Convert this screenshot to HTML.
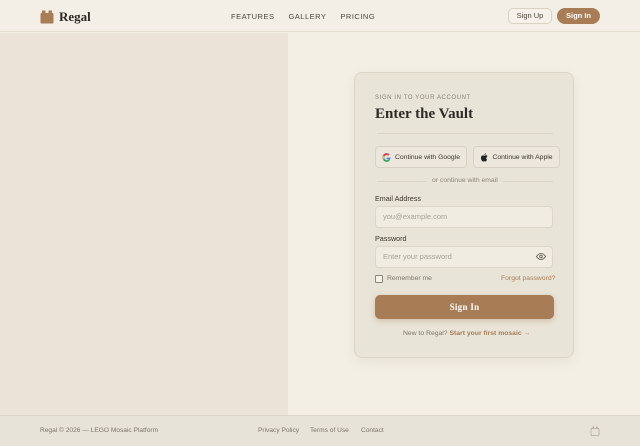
<!DOCTYPE html>
<html><head><style>
*{box-sizing:border-box;margin:0;padding:0}
body{width:640px;height:446px;overflow:hidden;background:#f4efe5;font-family:"Liberation Sans",sans-serif;position:relative;color:#3a332b}
.hdr{position:absolute;top:0;left:0;width:640px;height:32px;background:#f4efe6;border-bottom:1px solid #e4ddd0}
.logo{position:absolute;left:40px;top:9px;display:flex;align-items:center;gap:5px;font-family:"Liberation Serif",serif;font-weight:bold;font-size:13px;color:#2e2a25}
.nav{position:absolute;left:231px;top:12px;font-size:7.5px;letter-spacing:.5px;color:#4a443c}
.nav span{margin-right:14px}
.b1{position:absolute;left:508px;top:8px;width:44px;height:16px;border:1px solid #d9d2c4;border-radius:5px;font-size:7.5px;text-align:center;line-height:14px;color:#4a443c;background:#f6f2ea}
.b2{position:absolute;left:557px;top:8px;width:43px;height:16px;border-radius:8px;background:#a87c55;color:#fff;font-size:7.5px;font-weight:bold;text-align:center;line-height:16px}
.left{position:absolute;left:0;top:33px;width:288px;height:382px;background:#ebe3d7}
.card{position:absolute;left:354px;top:72px;width:220px;height:286px;background:#e9e4d8;border:1px solid #dcd5c6;border-radius:8px;box-shadow:0 4px 14px rgba(0,0,0,.06)}
.abs{position:absolute}
.btn{position:absolute;top:73px;height:22px;border:1px solid #d9d2c4;border-radius:4px;background:#ece7dc;font-size:6.8px;display:flex;align-items:center;justify-content:center;gap:4px;color:#3a332b}
.inp{position:absolute;left:20px;width:178px;height:22px;border:1px solid #ddd6c8;border-radius:4px;background:#f0ece2;font-size:7.5px;color:#a8a095;padding-left:7px;line-height:20px}
.lbl{font-size:7.2px;color:#3a332b}
.ftr{position:absolute;left:0;top:415px;width:640px;height:31px;background:#e8e3d8;border-top:1px solid #ddd6c8;font-size:6.6px;color:#7c756b}
</style></head><body>
<div class="hdr">
 <div class="logo"><svg width="14" height="14" viewBox="0 0 14 14"><rect x="2" y="0.5" width="3.5" height="3" fill="#a87c55"/><rect x="8.5" y="0.5" width="3.5" height="3" fill="#a87c55"/><rect x="0.5" y="3" width="13" height="10.5" rx="1" fill="#a87c55"/></svg>Regal</div>
 <div class="nav"><span>FEATURES</span><span>GALLERY</span><span>PRICING</span></div>
 <div class="b1">Sign Up</div><div class="b2">Sign In</div>
</div>
<div class="left"></div>
<div class="card">
 <div class="abs" style="left:20px;top:22px;font-size:6px;letter-spacing:.6px;color:#8a8378">SIGN IN TO YOUR ACCOUNT</div>
 <div class="abs" style="left:20px;top:33px;font-family:'Liberation Serif',serif;font-weight:bold;font-size:15px;color:#2e2a25">Enter the Vault</div>
 <div class="abs" style="left:22px;top:60px;width:176px;height:1px;background:#dbd4c6"></div>
 <div class="btn" style="left:20px;width:92px"><svg width="9" height="9" viewBox="0 0 10 10"><path d="M9.5 5.1H5v1.8h2.6A2.8 2.8 0 1 1 7 2.9l1.3-1.3A4.6 4.6 0 1 0 9.5 5.1z" fill="#4285f4"/><path d="M1.2 2.6l1.5 1.1A2.8 2.8 0 0 1 7 2.9l1.3-1.3A4.6 4.6 0 0 0 1.2 2.6z" fill="#ea4335"/><path d="M1.2 7.4l1.5-1.1a2.8 2.8 0 0 0 4.6.9l1.3 1.2A4.6 4.6 0 0 1 1.2 7.4z" fill="#34a853"/><path d="M1.2 2.6a4.6 4.6 0 0 0 0 4.8l1.5-1.1a2.8 2.8 0 0 1 0-2.6z" fill="#fbbc05"/></svg>Continue with Google</div>
 <div class="btn" style="left:118px;width:87px"><svg width="8" height="9" viewBox="0 0 8 9"><path d="M6.6 4.8c0-1.1.9-1.6.9-1.7-.5-.7-1.3-.8-1.5-.8-.6-.1-1.2.4-1.6.4s-.9-.4-1.4-.3C2.3 2.4 1.6 2.8 1.3 3.5c-.7 1.2-.2 3 .5 4 .3.5.7 1 1.2 1s.6-.3 1.2-.3.7.3 1.2.3.8-.5 1.1-1c.4-.5.5-1 .5-1-.1 0-.9-.4-.9-1.7zM5.6 1.5C5.9 1.2 6 .8 6 .3c-.4 0-.8.3-1.1.6-.2.3-.4.7-.4 1.1.4 0 .8-.2 1.1-.5z" fill="#222"/></svg>Continue with Apple</div>
 <div class="abs" style="left:22px;top:108px;width:176px;height:1px;background:#dbd4c6"></div>
 <div class="abs" style="left:72px;top:104px;padding:0 5px;background:#e9e4d8;font-size:6.8px;color:#8a8378">or continue with email</div>
 <div class="abs lbl" style="left:20px;top:121px">Email Address</div>
 <div class="inp" style="top:133px">you@example.com</div>
 <div class="abs lbl" style="left:20px;top:161px">Password</div>
 <div class="inp" style="top:173px">Enter your password</div>
 <svg class="abs" style="left:181px;top:180px" width="10" height="7" viewBox="0 0 10 7"><path d="M.5 3.5C2 1 3.5.5 5 .5s3 .5 4.5 3C8 6 6.5 6.5 5 6.5S2 6 .5 3.5z" fill="none" stroke="#5a544b" stroke-width=".8"/><circle cx="5" cy="3.5" r="1.3" fill="none" stroke="#5a544b" stroke-width=".8"/></svg>
 <div class="abs" style="left:20px;top:202px;width:8px;height:8px;border:1px solid #8a8378;border-radius:1.5px;background:#f6f2ea"></div>
 <div class="abs" style="left:32px;top:202px;font-size:6.8px;color:#7c756b">Remember me</div>
 <div class="abs" style="left:146px;top:202px;font-size:6.8px;color:#a87c55">Forgot password?</div>
 <div class="abs" style="left:20px;top:222px;width:179px;height:24px;border-radius:5px;background:#a87c55;box-shadow:0 2px 6px rgba(168,124,85,.35);color:#fff;font-family:'Liberation Serif',serif;font-weight:bold;font-size:9px;text-align:center;line-height:24px;letter-spacing:.3px">Sign In</div>
 <div class="abs" style="left:48px;top:257px;font-size:6.8px;color:#7c756b">New to Regal? <b style="color:#a87c55">Start your first mosaic →</b></div>
</div>
<div class="ftr">
 <div class="abs" style="left:40px;top:11px">Regal © 2026 — LEGO Mosaic Platform</div>
 <div class="abs" style="left:258px;top:11px">Privacy Policy</div>
 <div class="abs" style="left:310px;top:11px">Terms of Use</div>
 <div class="abs" style="left:361px;top:11px">Contact</div>
 <svg class="abs" style="left:590px;top:10px" width="10" height="10" viewBox="0 0 10 10"><rect x="1" y="2.5" width="8" height="7" rx="1" fill="none" stroke="#b0a898" stroke-width=".8"/><rect x="2.5" y=".5" width="1.5" height="2" fill="#b0a898"/><rect x="6" y=".5" width="1.5" height="2" fill="#b0a898"/></svg>
</div>
</body></html>
